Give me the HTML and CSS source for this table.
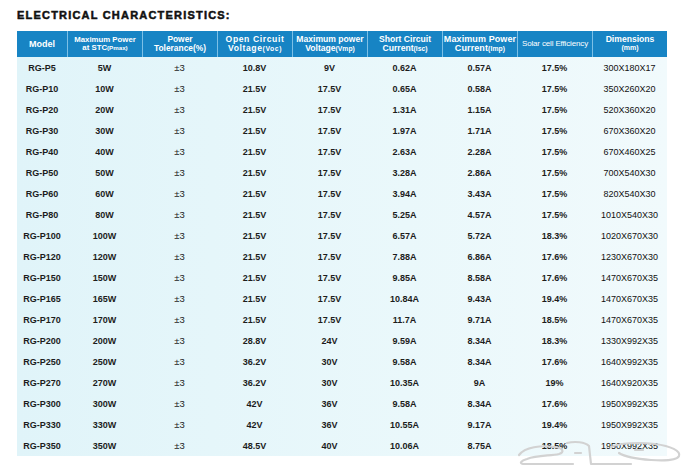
FILE: index.html
```html
<!DOCTYPE html>
<html>
<head>
<meta charset="utf-8">
<link rel="stylesheet" href="styles.css">
</head>
<body>
<div class="page">
  <h1 class="title">ELECTRICAL CHARACTERISTICS:</h1>
  <div class="table">
    <div class="head">
      <div class="hc h1"><span>Model</span></div>
      <div class="hc h2"><span>Maximum Power</span><span>at STC<small>(Pmax)</small></span></div>
      <div class="hc h3"><span>Power</span><span>Tolerance(%)</span></div>
      <div class="hc h4"><span>Open Circuit</span><span>Voltage<small>(Voc)</small></span></div>
      <div class="hc h5"><span>Maximum power</span><span>Voltage<small>(Vmp)</small></span></div>
      <div class="hc h6"><span>Short Circuit</span><span>Current<small>(Isc)</small></span></div>
      <div class="hc h7"><span>Maximum Power</span><span>Current<small>(Imp)</small></span></div>
      <div class="hc h8"><span>Solar cell Efficiency</span></div>
      <div class="hc h9"><span>Dimensions</span><span class="mm">(mm)</span></div>
    </div>
    <div class="body">
      <div class="row"><span>RG-P5</span><span>5W</span><span class="tol">±3</span><span>10.8V</span><span>9V</span><span>0.62A</span><span>0.57A</span><span>17.5%</span><span class="dim">300X180X17</span></div>
      <div class="row"><span>RG-P10</span><span>10W</span><span class="tol">±3</span><span>21.5V</span><span>17.5V</span><span>0.65A</span><span>0.58A</span><span>17.5%</span><span class="dim">350X260X20</span></div>
      <div class="row"><span>RG-P20</span><span>20W</span><span class="tol">±3</span><span>21.5V</span><span>17.5V</span><span>1.31A</span><span>1.15A</span><span>17.5%</span><span class="dim">520X360X20</span></div>
      <div class="row"><span>RG-P30</span><span>30W</span><span class="tol">±3</span><span>21.5V</span><span>17.5V</span><span>1.97A</span><span>1.71A</span><span>17.5%</span><span class="dim">670X360X20</span></div>
      <div class="row"><span>RG-P40</span><span>40W</span><span class="tol">±3</span><span>21.5V</span><span>17.5V</span><span>2.63A</span><span>2.28A</span><span>17.5%</span><span class="dim">670X460X25</span></div>
      <div class="row"><span>RG-P50</span><span>50W</span><span class="tol">±3</span><span>21.5V</span><span>17.5V</span><span>3.28A</span><span>2.86A</span><span>17.5%</span><span class="dim">700X540X30</span></div>
      <div class="row"><span>RG-P60</span><span>60W</span><span class="tol">±3</span><span>21.5V</span><span>17.5V</span><span>3.94A</span><span>3.43A</span><span>17.5%</span><span class="dim">820X540X30</span></div>
      <div class="row"><span>RG-P80</span><span>80W</span><span class="tol">±3</span><span>21.5V</span><span>17.5V</span><span>5.25A</span><span>4.57A</span><span>17.5%</span><span class="dim">1010X540X30</span></div>
      <div class="row"><span>RG-P100</span><span>100W</span><span class="tol">±3</span><span>21.5V</span><span>17.5V</span><span>6.57A</span><span>5.72A</span><span>18.3%</span><span class="dim">1020X670X30</span></div>
      <div class="row"><span>RG-P120</span><span>120W</span><span class="tol">±3</span><span>21.5V</span><span>17.5V</span><span>7.88A</span><span>6.86A</span><span>17.6%</span><span class="dim">1230X670X30</span></div>
      <div class="row"><span>RG-P150</span><span>150W</span><span class="tol">±3</span><span>21.5V</span><span>17.5V</span><span>9.85A</span><span>8.58A</span><span>17.6%</span><span class="dim">1470X670X35</span></div>
      <div class="row"><span>RG-P165</span><span>165W</span><span class="tol">±3</span><span>21.5V</span><span>17.5V</span><span>10.84A</span><span>9.43A</span><span>19.4%</span><span class="dim">1470X670X35</span></div>
      <div class="row"><span>RG-P170</span><span>170W</span><span class="tol">±3</span><span>21.5V</span><span>17.5V</span><span>11.7A</span><span>9.71A</span><span>18.5%</span><span class="dim">1470X670X35</span></div>
      <div class="row"><span>RG-P200</span><span>200W</span><span class="tol">±3</span><span>28.8V</span><span>24V</span><span>9.59A</span><span>8.34A</span><span>18.3%</span><span class="dim">1330X992X35</span></div>
      <div class="row"><span>RG-P250</span><span>250W</span><span class="tol">±3</span><span>36.2V</span><span>30V</span><span>9.58A</span><span>8.34A</span><span>17.6%</span><span class="dim">1640X992X35</span></div>
      <div class="row"><span>RG-P270</span><span>270W</span><span class="tol">±3</span><span>36.2V</span><span>30V</span><span>10.35A</span><span>9A</span><span>19%</span><span class="dim">1640X920X35</span></div>
      <div class="row"><span>RG-P300</span><span>300W</span><span class="tol">±3</span><span>42V</span><span>36V</span><span>9.58A</span><span>8.34A</span><span>17.6%</span><span class="dim">1950X992X35</span></div>
      <div class="row"><span>RG-P330</span><span>330W</span><span class="tol">±3</span><span>42V</span><span>36V</span><span>10.55A</span><span>9.17A</span><span>19.4%</span><span class="dim">1950X992X35</span></div>
      <div class="row"><span>RG-P350</span><span>350W</span><span class="tol">±3</span><span>48.5V</span><span>40V</span><span>10.06A</span><span>8.75A</span><span>18.5%</span><span class="dim">1950X992X35</span></div>
    </div>
    <svg class="watermark" width="170" height="34" viewBox="0 0 170 34" fill="none" stroke="#d2d2d2" stroke-width="2.2" stroke-linecap="round" stroke-linejoin="round">
      <path d="M4 22 C10 14 26 12 40 14 C48 15 50 19 44 21 C36 23 22 22 12 26 C6 28 4 30 8 31 L58 31"/>
      <path d="M52 10 C60 8 70 9 74 13 L76 31 L116 31"/>
      <path d="M96 14 C104 10 124 9 140 11 C156 13 166 18 164 23 C162 27 150 28 136 27 C122 26 110 24 104 20"/>
      <path d="M60 20 L66 20 M120 17 L128 17"/>
    </svg>
  </div>
</div>
</body>
</html>
```
FILE: styles.css
```css
* { box-sizing: border-box; }
html, body { margin: 0; padding: 0; background: #ffffff; }
.page {
  width: 700px;
  height: 471px;
  padding: 9px 0 0 17px;
  font-family: "Liberation Sans", Arial, sans-serif;
  color: #1c1c1c;
}
.title {
  margin: 0 0 9px 0;
  font-size: 11px;
  line-height: 13px;
  font-weight: bold;
  letter-spacing: 1.2px;
  color: #111;
  -webkit-text-stroke: 0.5px #111;
}
.table {
  position: relative;
  width: 650px;
}
.head {
  display: grid;
  grid-template-columns: 50px repeat(8, 75px);
  height: 26px;
  background: #1784c4;
}
.hc {
  display: flex;
  flex-direction: column;
  align-items: center;
  justify-content: center;
  color: #ffffff;
  font-weight: bold;
  font-size: 8.6px;
  line-height: 8.6px;
  white-space: nowrap;
  border-left: 1px solid #7cc0e6;
  text-align: center;
  overflow: hidden;
}
.hc:first-child { border-left: none; }
.hc small { font-size: 6.8px; }
.h1 { font-size: 9px; }
.h2 { font-size: 7.8px; line-height: 8px; }
.h2 small { font-size: 6.2px; }
.h3 { font-size: 8.4px; }
.h4 { letter-spacing: 0.6px; }
.h7 { font-size: 9px; letter-spacing: 0.1px; }
.h8 { font-weight: normal; font-size: 8px; letter-spacing: -0.15px; }
.h9 .mm { font-size: 7px; }
.body {
  width: 650px;
  background: linear-gradient(to right, #e0f4f9 0%, #eaf8fb 60%, #f1fafc 100%);
}
.row {
  display: grid;
  grid-template-columns: 50px repeat(8, 75px);
  width: 650px;
  height: 21px;
  align-items: center;
  font-size: 9px;
  font-weight: bold;
}
.row span {
  text-align: center;
  white-space: nowrap;
}
.row .tol { font-weight: normal; font-size: 9.5px; }
.row .dim { font-weight: normal; color: #111; }
.watermark {
  position: absolute;
  right: -18px;
  bottom: -11px;
}
```
